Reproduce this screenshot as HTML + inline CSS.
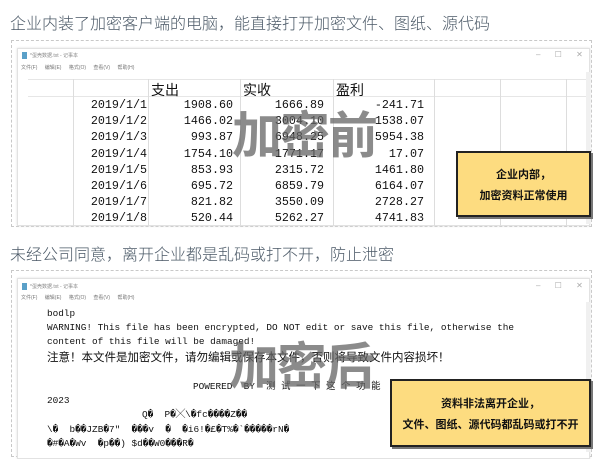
<!DOCTYPE html>
<html><head><meta charset="utf-8"><style>
*{margin:0;padding:0;box-sizing:border-box}
body{width:600px;height:459px;background:#fff;position:relative;overflow:hidden;font-family:"Liberation Sans","Noto Sans CJK SC",sans-serif}
.abs{position:absolute;white-space:nowrap}
.title{font-size:16px;color:#4a5866;left:10px;font-weight:300}
.dash{position:absolute;left:11px;width:581px;border:1px dashed #c8c8c8}
.win{position:absolute;left:17px;width:573px;background:#fff;border:1px solid #e2e2e2;box-shadow:0 0 2px #ddd}
.wt{font-size:5px;color:#888}
.menu{font-size:5px;color:#777;word-spacing:6px}
.mono{font-family:"Liberation Mono","Noto Sans CJK SC",monospace;color:#111}
.num{font-size:11.7px;text-align:right;position:absolute}
.wm{font-weight:bold;font-size:50px;color:rgba(100,100,100,0.75);font-family:"Noto Sans CJK SC",sans-serif;letter-spacing:-2px}
.yb{position:absolute;background:#fddc80;border:2px solid #222;box-shadow:2px 2px 0 #777;font-weight:bold;font-size:11px;color:#111;text-align:center;font-family:"Noto Sans CJK SC",sans-serif;line-height:21px}
.vl{position:absolute;width:1px;background:#ddd}
.hl{position:absolute;height:1px;background:#e6e6e6}
</style></head><body>
<div class="abs title" style="top:10px">企业内装了加密客户端的电脑，能直接打开加密文件、图纸、源代码</div>
<div class="dash" style="top:40px;height:187px"></div>
<div class="win" style="top:48px;height:178px"></div>
<div class="abs" style="left:22px;top:52px;width:5px;height:7px;background:#5aa0c8"></div>
<div class="abs wt" style="left:30px;top:52px">*蛋壳数据.txt - 记事本</div>
<div class="abs wt" style="left:536px;top:50px;font-size:8px;color:#aaa;word-spacing:12px">– ☐ ✕</div>
<div class="abs menu" style="left:21px;top:64px">文件(F) 编辑(E) 格式(O) 查看(V) 帮助(H)</div>
<div class="abs" style="left:586px;top:72px;width:4px;height:152px;background:#f0f0f0"></div>
<div class="hl" style="left:28px;top:96px;width:558px"></div>
<div class="hl" style="left:28px;top:79px;width:558px"></div>
<div class="vl" style="left:73px;top:79px;height:147px"></div>
<div class="vl" style="left:148px;top:79px;height:147px"></div>
<div class="vl" style="left:240px;top:79px;height:147px"></div>
<div class="vl" style="left:333px;top:79px;height:147px"></div>
<div class="vl" style="left:434px;top:79px;height:147px"></div>
<div class="vl" style="left:500px;top:79px;height:147px"></div>
<div class="vl" style="left:566px;top:79px;height:147px"></div>
<div class="abs mono" style="left:151px;top:80px;font-size:14px">支出</div>
<div class="abs mono" style="left:243px;top:80px;font-size:14px">实收</div>
<div class="abs mono" style="left:336px;top:80px;font-size:14px">盈利</div>
<div class="mono" style="position:absolute;left:0;top:97px;width:600px;line-height:16.2px">
<div class="num" style="left:60px;width:87px">2019/1/1<br>2019/1/2<br>2019/1/3<br>2019/1/4<br>2019/1/5<br>2019/1/6<br>2019/1/7<br>2019/1/8</div>
<div class="num" style="left:150px;width:83px">1908.60<br>1466.02<br>993.87<br>1754.10<br>853.93<br>695.72<br>821.82<br>520.44</div>
<div class="num" style="left:240px;width:84px">1666.89<br>3004.10<br>6948.25<br>1771.17<br>2315.72<br>6859.79<br>3550.09<br>5262.27</div>
<div class="num" style="left:330px;width:94px">-241.71<br>1538.07<br>5954.38<br>17.07<br>1461.80<br>6164.07<br>2728.27<br>4741.83</div>
</div>
<div class="abs wm" style="left:232px;top:96px">加密前</div>
<div class="yb" style="left:456px;top:151px;width:135px;height:66px;padding-top:11px">企业内部，<br>加密资料正常使用</div>

<div class="abs title" style="top:241px">未经公司同意，离开企业都是乱码或打不开，防止泄密</div>
<div class="dash" style="top:270px;height:187px"></div>
<div class="win" style="top:278px;height:181px"></div>
<div class="abs" style="left:22px;top:283px;width:5px;height:7px;background:#5aa0c8"></div>
<div class="abs wt" style="left:30px;top:283px">*蛋壳数据.txt - 记事本</div>
<div class="abs wt" style="left:536px;top:281px;font-size:8px;color:#aaa;word-spacing:12px">– ☐ ✕</div>
<div class="abs menu" style="left:21px;top:294px">文件(F) 编辑(E) 格式(O) 查看(V) 帮助(H)</div>
<div class="abs" style="left:586px;top:302px;width:4px;height:150px;background:#f0f0f0"></div>
<div class="abs mono" style="left:47px;top:307px;font-size:9.4px;line-height:14.2px">
bodlp<br>WARNING! This file has been encrypted, DO NOT edit or save this file, otherwise the<br>content of this file will be damaged!<br><span style="font-family:'Noto Sans CJK SC',sans-serif;font-size:11.5px">注意！本文件是加密文件，请勿编辑或保存本文件，否则将导致文件内容损坏！</span><br><br><span style="padding-left:146px">POWERED &nbsp;BY &nbsp;测 试 一 下 这 个 功 能</span><br>2023<br><span style="padding-left:95px">Q� &nbsp;P�╳\�fc����Z��</span><br>\� &nbsp;b��JZB�7″ &nbsp;���v &nbsp;� &nbsp;�i6!�£�T%�`�����rN�<br>�#�A�Wv &nbsp;�p��) $d��W0���R�</div>
<div class="abs wm" style="left:229px;top:327px">加密后</div>
<div class="yb" style="left:390px;top:379px;width:201px;height:68px;padding-top:12px">资料非法离开企业，<br>文件、图纸、源代码都乱码或打不开</div>
</body></html>
